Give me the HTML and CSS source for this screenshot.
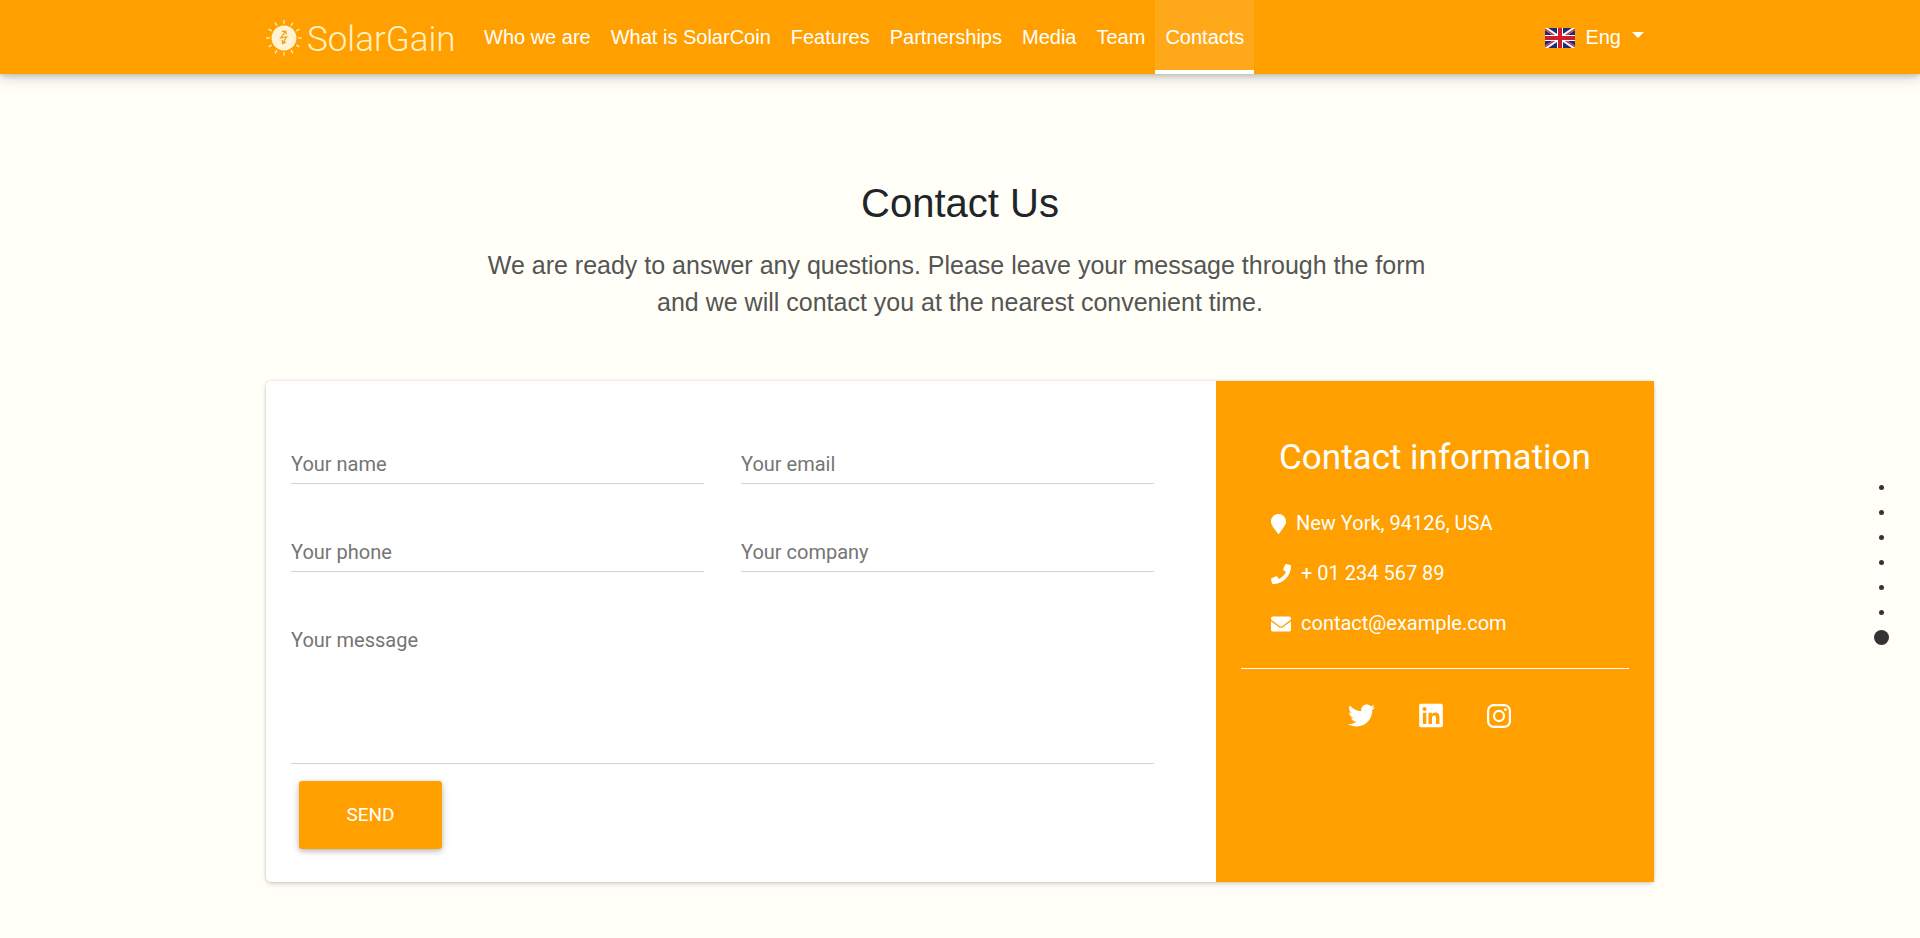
FILE: index.html
```html
<!DOCTYPE html>
<html lang="en">
<head>
<meta charset="utf-8">
<title>SolarGain - Contact Us</title>
<link rel="stylesheet" href="styles.css">
</head>
<body>
<header class="navbar">
  <div class="container navbar-inner">
    <a class="brand" href="#">
      <svg class="brand-sun" viewBox="0 0 36 36" width="36" height="36">
        <circle cx="18" cy="18" r="12.4" fill="#fff3d2"/>
        <g stroke="#ffe9ae" stroke-width="1.4" stroke-linecap="round">
          <path d="M18 .7v2.6M18 32.7v2.6M.7 18h2.6M32.7 18h2.6M9.35 3l1.3 2.3M25.35 30.7l1.3 2.3M3 9.35l2.3 1.3M30.7 25.35l2.3 1.3M26.65 3l-1.3 2.3M10.65 30.7L9.35 33M33 9.35l-2.3 1.3M5.3 25.35L3 26.65"/>
        </g>
        <path d="M19.400 11.600l-4.600 6.200 5.800-.9-3.600 6.100M16 11.500l3.700-.4.600 3.600M16.200 19.800l.5 3.700 3.500-1.500" fill="none" stroke="#f0a020" stroke-width="1.300"/>
      </svg>
      <span class="brand-name">SolarGain</span>
    </a>
    <nav class="menu">
      <a href="#">Who we are</a>
      <a href="#">What is SolarCoin</a>
      <a href="#">Features</a>
      <a href="#">Partnerships</a>
      <a href="#">Media</a>
      <a href="#">Team</a>
      <a class="active" href="#">Contacts</a>
    </nav>
    <a class="language" href="#">
      <svg class="flag" viewBox="0 0 60 40" width="30" height="20">
        <path fill="#192f78" d="M0 0h60v40H0z"/>
        <path d="M0 0l60 40M60 0L0 40" stroke="#fff" stroke-width="7"/>
        <path d="M0 2l27 18M33 20l27 18M60 2L33 20M27 20L0 38" stroke="#cf1b2b" stroke-width="2.400"/>
        <path d="M30 0v40M0 20h60" stroke="#fff" stroke-width="12"/>
        <path d="M30 0v40M0 20h60" stroke="#cf1b2b" stroke-width="8"/>
      </svg>
      <span>Eng</span>
      <i class="caret"></i>
    </a>
  </div>
</header>

<main class="container">
  <h1 class="title">Contact Us</h1>
  <p class="lead">We are ready to answer any questions. Please leave your message through the form&nbsp;<br>and we will contact you at the nearest convenient time.</p>

  <section class="card">
    <form class="form">
      <div class="fields">
        <input class="field" type="text" placeholder="Your name">
        <input class="field" type="text" placeholder="Your email">
        <input class="field" type="text" placeholder="Your phone">
        <input class="field" type="text" placeholder="Your company">
        <textarea class="field message" placeholder="Your message"></textarea>
      </div>
      <button class="send" type="button">SEND</button>
    </form>
    <aside class="info">
      <h2 class="info-title">Contact information</h2>
      <ul class="info-list">
        <li><svg width="15" height="20" viewBox="0 0 384 512"><path d="M172.268 501.67C26.97 291.031 0 269.413 0 192 0 85.961 85.961 0 192 0s192 85.961 192 192c0 77.413-26.97 99.031-172.268 309.67-9.535 13.774-29.93 13.773-39.464 0z"/></svg>New York, 94126, USA</li>
        <li><svg width="20" height="20" viewBox="0 0 512 512"><path d="M493.4 24.6l-104-24c-11.3-2.6-22.9 3.3-27.5 13.9l-48 112c-4.200 9.800-1.400 21.300 6.900 28l60.600 49.600c-36 76.700-98.900 140.500-177.200 177.200l-49.600-60.600c-6.800-8.300-18.200-11.100-28-6.900l-112 48C3.900 366.500-2 378.100.6 389.400l24 104C27.100 504.200 36.700 512 48 512c256.100 0 464-207.500 464-464 0-11.200-7.700-20.900-18.600-23.400z"/></svg>+ 01 234 567 89</li>
        <li><svg width="20" height="20" viewBox="0 0 512 512"><path d="M502.300 190.800c3.900-3.100 9.700-.2 9.700 4.700V400c0 26.500-21.500 48-48 48H48c-26.500 0-48-21.500-48-48V195.600c0-5 5.700-7.800 9.700-4.700 22.400 17.400 52.100 39.500 154.100 113.600 21.100 15.400 56.700 47.800 92.200 47.600 35.700.3 72-32.800 92.300-47.600 102-74.100 131.600-96.300 154-113.700zM256 320c23.200.4 56.600-29.200 73.400-41.400 132.700-96.300 142.800-104.700 173.400-128.700 5.800-4.500 9.200-11.500 9.200-18.900v-19c0-26.500-21.500-48-48-48H48c-26.500 0-48 21.500-48 48v19c0 7.400 3.400 14.300 9.200 18.900 30.600 23.900 40.700 32.400 173.400 128.700 16.800 12.200 50.200 41.800 73.400 41.400z"/></svg>contact@example.com</li>
      </ul>
      <hr class="divider">
      <div class="social">
        <a href="#" aria-label="Twitter"><svg width="27" height="27" viewBox="0 0 512 512"><path d="M459.370 151.716c.325 4.548.325 9.097.325 13.645 0 138.720-105.583 298.558-298.558 298.558-59.452 0-114.680-17.219-161.137-47.106 8.447.974 16.568 1.299 25.340 1.299 49.055 0 94.213-16.568 130.274-44.832-46.132-.975-84.792-31.188-98.112-72.772 6.498.974 12.995 1.624 19.818 1.624 9.421 0 18.843-1.300 27.614-3.573-48.081-9.747-84.143-51.980-84.143-102.985v-1.299c13.969 7.797 30.214 12.670 47.431 13.319-28.264-18.843-46.781-51.005-46.781-87.391 0-19.492 5.197-37.360 14.294-52.954 51.655 63.675 129.300 105.258 216.365 109.807-1.624-7.797-2.599-15.918-2.599-24.040 0-57.828 46.782-104.934 104.934-104.934 30.213 0 57.502 12.670 76.670 33.137 23.715-4.548 46.456-13.320 66.599-25.340-7.798 24.366-24.366 44.833-46.132 57.827 21.117-2.273 41.584-8.122 60.426-16.243-14.292 20.791-32.161 39.308-52.628 54.253z"/></svg></a>
        <a href="#" aria-label="LinkedIn"><svg width="24" height="27" viewBox="0 0 448 512"><path d="M416 32H31.900C14.300 32 0 46.500 0 64.300v383.400C0 465.500 14.300 480 31.900 480H416c17.600 0 32-14.500 32-32.300V64.300c0-17.800-14.400-32.300-32-32.300zM135.400 416H69V202.200h66.500V416zm-33.200-243c-21.300 0-38.500-17.300-38.500-38.500S80.900 96 102.200 96c21.200 0 38.500 17.300 38.500 38.500 0 21.300-17.200 38.500-38.500 38.500zm282.100 243h-66.400V312c0-24.800-.5-56.700-34.500-56.700-34.600 0-39.900 27-39.900 54.900V416h-66.400V202.200h63.700v29.200h.9c8.900-16.800 30.600-34.500 62.900-34.500 67.200 0 79.700 44.300 79.700 101.900V416z"/></svg></a>
        <a href="#" aria-label="Instagram"><svg width="24" height="24" viewBox="0 0 24 24"><rect x="1.100" y="1.100" width="21.800" height="21.800" rx="5.700" fill="none" stroke="#fff" stroke-width="2.200"/><circle cx="12" cy="12" r="5.050" fill="none" stroke="#fff" stroke-width="2.200"/><circle cx="18.400" cy="5.600" r="1.450"/></svg></a>
      </div>
    </aside>
  </section>
</main>

<nav class="page-dots">
  <i></i><i></i><i></i><i></i><i></i><i></i><i class="current"></i>
</nav>
</body>
</html>
```
FILE: styles.css
```css
* { box-sizing: border-box; }

body {
  margin: 0;
  height: 938px;
  overflow: hidden;
  background: #fffff7;
  color: #212529;
  font: 20px/1.5 "Liberation Sans", Arial, sans-serif;
}

a { color: inherit; text-decoration: none; }

.container { width: 1388px; margin: 0 auto; }

.navbar {
  height: 74px;
  background: #ffa000;
  color: #fff;
  box-shadow: 0 2px 5px rgba(0, 0, 0, .16), 0 4px 14px rgba(0, 0, 0, .16);
}
.navbar-inner { display: flex; height: 100%; }

.brand { display: flex; width: 208px; padding-top: 19.500px; }
.brand-sun { flex: none; }
.brand-name {
  margin: -1px 0 0 5px;
  color: #fff2c4;
  font: 300 35px/42px Roboto, sans-serif;
}

.menu { display: flex; }
.menu a { padding: 22px 10px 0; }
.menu .active {
  background: rgba(255, 255, 255, .1);
  border-bottom: 4px solid #fff;
}

.language {
  display: flex;
  align-items: flex-start;
  margin-left: auto;
  padding: 22px 10px 0 0;
}
.flag { margin: 6px 10px 0 0; }
.caret {
  margin: 10px 0 0 11px;
  border: 6px solid transparent;
  border-top-color: #fff;
  border-bottom: 0;
}

.title {
  margin: 105px 0 0;
  font-size: 40px;
  font-weight: 400;
  line-height: 48px;
  text-align: center;
}
.lead {
  margin: 20px 0 0;
  color: #555;
  font-size: 25px;
  line-height: 37px;
  text-align: center;
}

.card {
  display: flex;
  height: 501px;
  margin-top: 60px;
  background: #fff;
  border-radius: 5px;
  box-shadow: 0 2px 5px rgba(0, 0, 0, .16), 0 0 3px rgba(0, 0, 0, .12);
  font-family: Roboto, sans-serif;
}
.form { width: 950px; padding: 61px 62px 0 25px; }
.fields {
  display: grid;
  grid-template-columns: 1fr 1fr;
  grid-auto-rows: 42px;
  gap: 46px 37px;
}
.field {
  width: 100%;
  padding: 2px 0 0;
  border: 0;
  border-bottom: 1px solid #ced4da;
  background: transparent;
  color: #495057;
  font: 20px/30px Roboto, sans-serif;
  outline: 0;
}
.field::placeholder { color: #757575; opacity: 1; }
.message {
  grid-column: 1 / 3;
  height: 146px;
  padding-top: 7px;
  resize: none;
}
.send {
  display: block;
  width: 143px;
  height: 68px;
  margin: 121px 0 0 8px;
  border: 0;
  border-radius: 3px;
  background: #ffa000;
  color: #fff;
  font: 19px/28px Roboto, sans-serif;
  box-shadow: 0 2px 5px rgba(0, 0, 0, .2), 0 2px 10px rgba(0, 0, 0, .12);
}

.info {
  width: 438px;
  padding: 56px 25px 0;
  background: #ffa000;
  color: #fff;
}
.info-title {
  margin: 0;
  font-size: 35px;
  font-weight: 400;
  line-height: 42px;
  text-align: center;
}
.info-list {
  display: grid;
  gap: 20px;
  margin: 29px 0 0;
  padding: 0 0 0 30px;
  list-style: none;
}
.info-list li { display: flex; line-height: 30px; }
.info-list svg { margin: 6px 10px 0 0; }
.info svg { fill: #fff; }
.divider {
  height: 1px;
  margin: 30px 0 0;
  border: 0;
  background: #fff;
}
.social {
  display: flex;
  align-items: center;
  justify-content: center;
  gap: 44px;
  margin: 33px 0 0;
  padding-right: 11px;
}
.social svg { display: block; }

.page-dots {
  position: absolute;
  top: 475px;
  right: 31px;
  display: grid;
  grid-auto-rows: 25px;
  place-items: center;
  width: 15px;
}
.page-dots i {
  width: 5px;
  height: 5px;
  border-radius: 50%;
  background: #333;
}
.page-dots .current { width: 15px; height: 15px; }
```
